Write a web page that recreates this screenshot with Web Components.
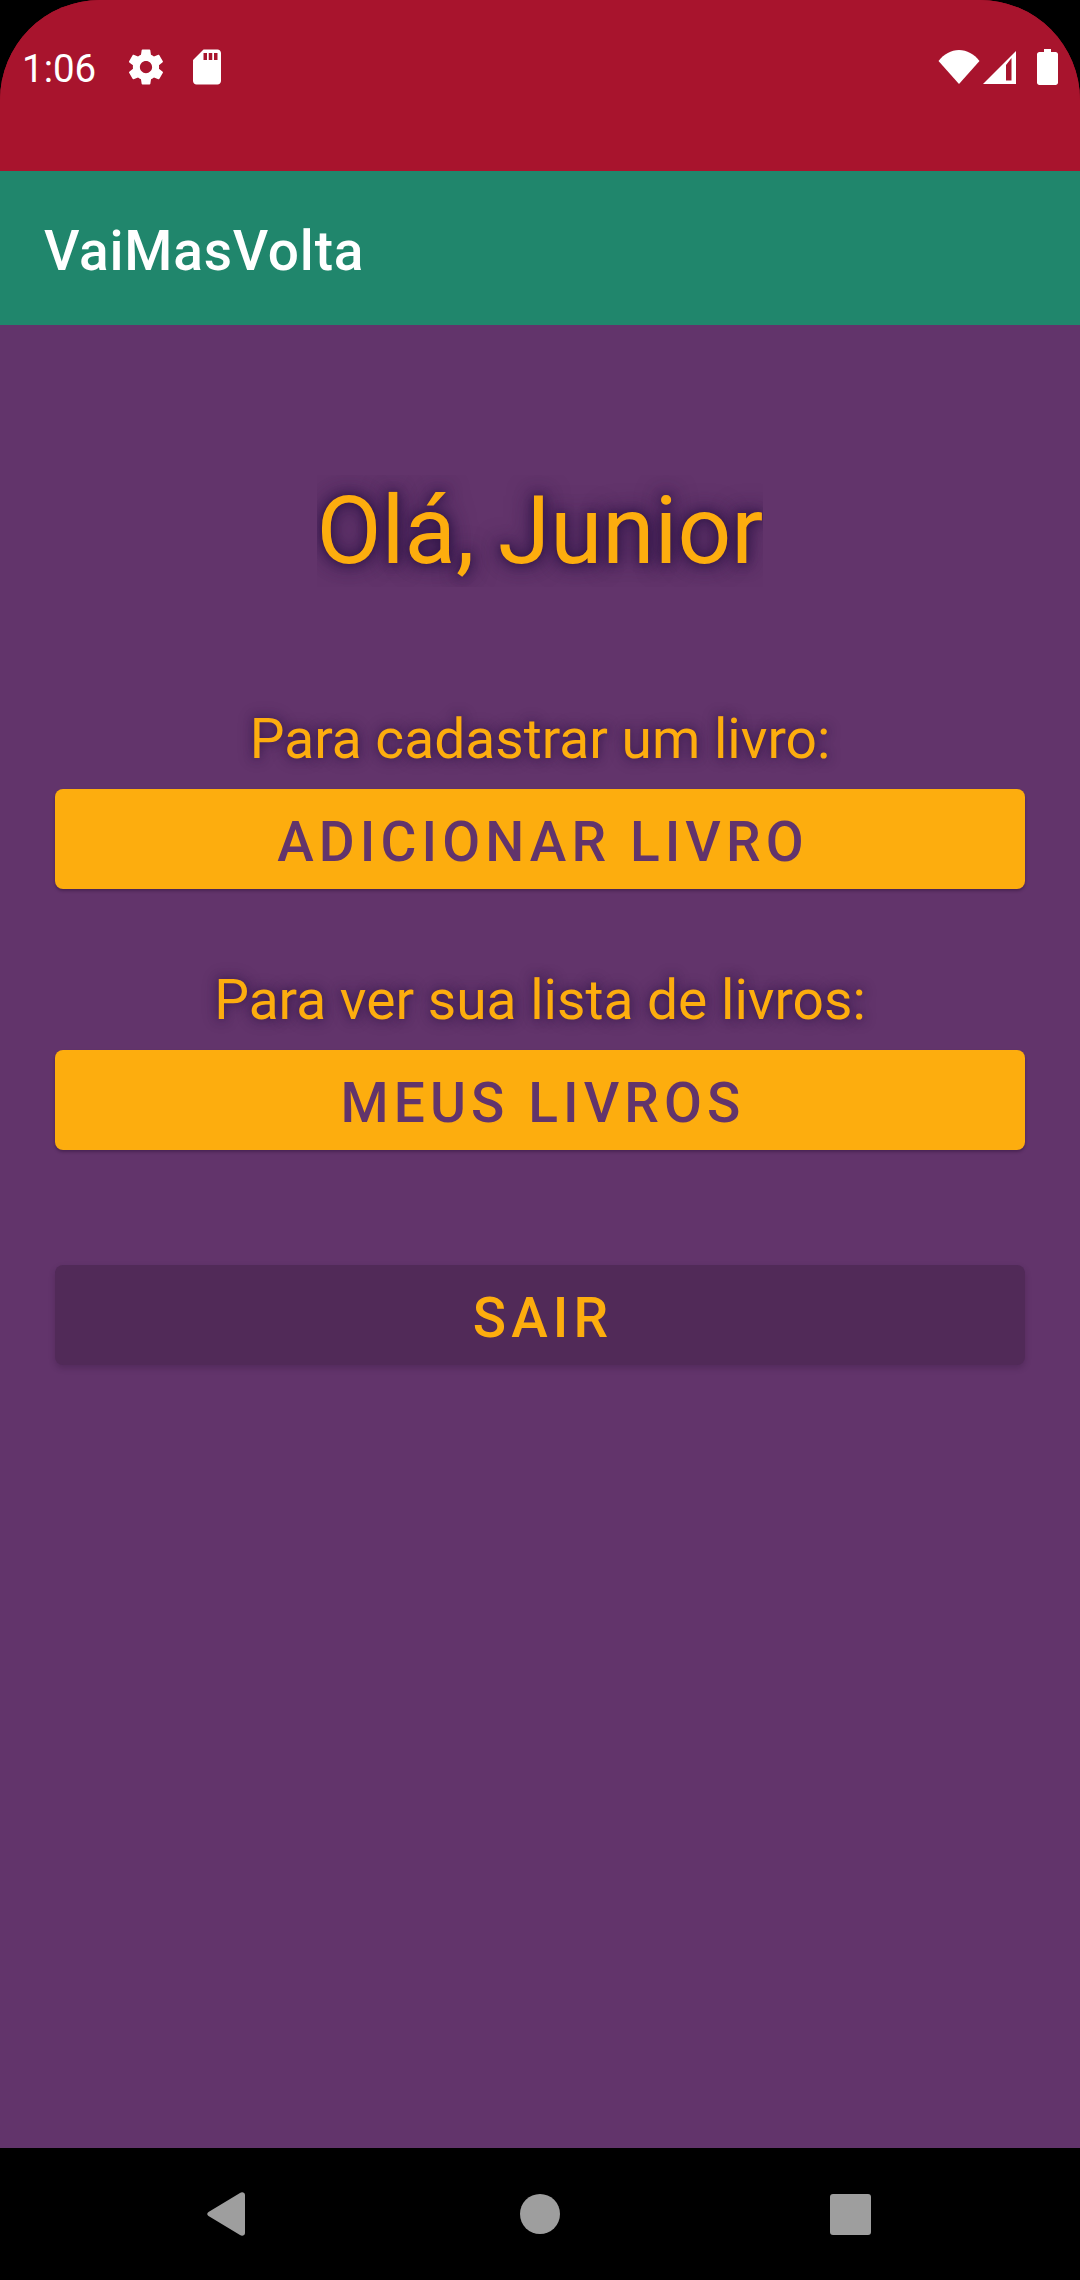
<!DOCTYPE html>
<html lang="pt">
<head>
<meta charset="utf-8">
<title>VaiMasVolta</title>
<style>
  html, body { margin: 0; background: #000; }
  body { width: 1080px; height: 2280px; overflow: hidden; font-family: Roboto, "Liberation Sans", sans-serif; }
</style>
</head>
<body>
<phone-frame>
  <status-bar time="1:06"></status-bar>
  <app-bar>VaiMasVolta</app-bar>
  <home-screen>
    <hello-title>Olá, Junior</hello-title>
    <action-group label="Para cadastrar um livro:">
      <action-button>ADICIONAR LIVRO</action-button>
    </action-group>
    <action-group label="Para ver sua lista de livros:">
      <action-button>MEUS LIVROS</action-button>
    </action-group>
    <action-button variant="dark">SAIR</action-button>
  </home-screen>
  <nav-bar></nav-bar>
</phone-frame>

<script>
// Funkcja pomocnicza: tworzy shadow root z podanego kodu HTML.
function shadow(el, html) {
  el.attachShadow({mode: "open"}).innerHTML = html;
}

// Ramka telefonu: zaokrąglone górne rogi i cztery wiersze ekranu.
class PhoneFrame extends HTMLElement {
  constructor() {
    super();
    shadow(this, `
<style>
:host {
  display: grid;
  grid-template-rows: 171px 154px 1823px 132px;
  width: 1080px;
  height: 2280px;
  background: #a8142d;
  border-radius: 100px 100px 0 0;
  overflow: hidden;
}
</style>
<slot></slot>`);
  }
}

// Górny pasek systemowy z godziną i ikonami.
class StatusBar extends HTMLElement {
  constructor() {
    super();
    shadow(this, `
<style>
:host {
  display: flex;
  align-items: flex-start;
  justify-content: space-between;
  background: #a8142d;
  color: #fff;
  padding: 46px 22px 0 22px;
}
.left, .right { display: flex; align-items: flex-start; }
.right { margin-top: 3px; }
.time { font-size: 38.5px; line-height: 46px; width: 103px; }
svg { display: block; fill: #fff; }
.sd { margin-left: 19px; }
.signal { margin-left: 2px; margin-top: 1px; }
.battery { margin-left: 19px; }
</style>
<div class="left">
  <span class="time">${this.getAttribute("time")}</span>
  <svg width="42" height="42" viewBox="0 0 24 24"><path d="M19.4 13c.04-.32.07-.65.07-1s-.03-.68-.07-1l2.11-1.65c.19-.15.24-.42.12-.64l-2-3.46c-.12-.22-.39-.3-.61-.22l-2.49 1c-.52-.4-1.08-.73-1.69-.98l-.38-2.65C14.46 2.18 14.25 2 14 2h-4c-.25 0-.46.18-.49.42l-.38 2.65c-.61.25-1.17.59-1.69.98l-2.49-1c-.23-.09-.49 0-.61.22l-2 3.46c-.13.22-.07.49.12.64L4.57 11c-.04.32-.07.66-.07 1s.03.68.07 1l-2.11 1.65c-.19.15-.24.42-.12.64l2 3.46c.12.22.39.3.61.22l2.49-1c.52.4 1.08.73 1.69.98l.38 2.65c.03.24.24.42.49.42h4c.25 0 .46-.18.49-.42l.38-2.65c.61-.25 1.17-.59 1.69-.98l2.49 1c.23.09.49 0 .61-.22l2-3.46c.12-.22.07-.49-.12-.64L19.4 13zM12 15.5c-1.93 0-3.5-1.57-3.5-3.5s1.57-3.5 3.5-3.5 3.5 1.57 3.5 3.5-1.57 3.5-3.5 3.5z"/></svg>
  <svg class="sd" width="42" height="42" viewBox="0 0 24 24"><path d="M18 2h-8L4.020 8 4 20c0 1.100.9 2 2 2h12c1.100 0 2-.9 2-2V4c0-1.100-.9-2-2-2zm-6 6h-2V4h2v4zm3 0h-2V4h2v4zm3 0h-2V4h2v4z"/></svg>
</div>
<div class="right">
  <svg width="42" height="36" viewBox="0 0 42 36"><path d="M0.5 12C6 5 13 1 21 1s15 4 20.500 11L21 35z"/></svg>
  <svg class="signal" width="36" height="36" viewBox="0 0 36 36"><path fill-rule="evenodd" d="M1 34L34 1v33zM24 30.500h5.500V8L24 15z"/></svg>
  <svg class="battery" width="21" height="36" viewBox="0 0 21 36"><path d="M7 0h7v3h4.500C20 3 21 4 21 5.500v28c0 1.500-1 2.500-2.500 2.500h-16C1 36 0 35 0 33.500v-28C0 4 1 3 2.500 3H7z"/></svg>
</div>`);
  }
}

// Pasek aplikacji z tytułem.
class AppBar extends HTMLElement {
  constructor() {
    super();
    shadow(this, `
<style>
:host {
  display: flex;
  align-items: center;
  background: #20866c;
  color: #fff;
  padding: 5px 0 0 44px;
  font-size: 55px;
  font-weight: 500;
  letter-spacing: .8px;
}
</style>
<slot></slot>`);
  }
}

// Główna zawartość ekranu: kolumna na fioletowym tle.
class HomeScreen extends HTMLElement {
  constructor() {
    super();
    shadow(this, `
<style>
:host {
  display: flex;
  flex-direction: column;
  background: #62346b;
  padding: 150px 55px 0;
}
::slotted(action-group) { margin-bottom: 79px; }
::slotted(action-button) { margin-top: 36px; }
</style>
<slot></slot>`);
  }
}

// Powitanie: cień jest przycinany do prostokąta tekstu.
class HelloTitle extends HTMLElement {
  constructor() {
    super();
    shadow(this, `
<style>
:host {
  display: block;
  margin-bottom: 120px;
  color: #fdad0e;
  font-size: 94.5px;
  line-height: 112px;
}
div {
  width: fit-content;
  margin: 0 auto;
  overflow: hidden;
  text-shadow: 0 0 10px rgba(45, 20, 70, .9), 0 0 18px rgba(45, 20, 70, .8), 0 0 26px rgba(45, 20, 70, .6);
}
</style>
<div><slot></slot></div>`);
  }
}

// Opis i przycisk pod nim.
class ActionGroup extends HTMLElement {
  constructor() {
    super();
    shadow(this, `
<style>
:host { display: block; }
p {
  margin: 0 0 18px;
  text-align: center;
  color: #fdad0e;
  font-size: 55.1px;
  line-height: 64px;
  text-shadow: 0 0 10px rgba(45, 20, 70, .75), 0 0 16px rgba(45, 20, 70, .4);
}
</style>
<p>${this.getAttribute("label")}</p>
<slot></slot>`);
  }
}

class ActionButton extends HTMLElement {
  constructor() {
    super();
    shadow(this, `
<style>
:host {
  display: flex;
  align-items: center;
  justify-content: center;
  box-sizing: border-box;
  height: 100px;
  padding: 6px 0 0 6px;
  border-radius: 8px;
  background: #fdad0e;
  color: #62346b;
  font-size: 55px;
  font-weight: 500;
  letter-spacing: 5.1px;
  box-shadow: 0 2px 3px rgba(30, 10, 40, .35);
}
:host([variant="dark"]) {
  background: #512a58;
  color: #fdad0e;
  box-shadow: 0 3px 6px rgba(30, 10, 40, .22);
}
</style>
<slot></slot>`);
  }
}

// Dolny pasek nawigacji systemowej: wstecz, ekran główny, ostatnie.
class NavBar extends HTMLElement {
  constructor() {
    super();
    shadow(this, `
<style>
:host {
  display: flex;
  align-items: center;
  gap: 270px;
  background: #000;
  padding-left: 207px;
}
svg { display: block; fill: #9e9e9e; }
.back { margin-right: 5px; }
</style>
<svg class="back" width="38" height="44" viewBox="0 0 38 44"><path d="M33 1c2-1.500 5-.5 5 2v38c0 2.500-3 3.500-5 2L1.500 24c-1.700-1.200-1.700-2.800 0-4z"/></svg>
<svg width="40" height="40" viewBox="0 0 40 40"><circle cx="20" cy="20" r="20"/></svg>
<svg width="41" height="41" viewBox="0 0 41 41"><rect width="41" height="41" rx="3"/></svg>`);
  }
}

customElements.define("phone-frame", PhoneFrame);
customElements.define("status-bar", StatusBar);
customElements.define("app-bar", AppBar);
customElements.define("home-screen", HomeScreen);
customElements.define("hello-title", HelloTitle);
customElements.define("action-group", ActionGroup);
customElements.define("action-button", ActionButton);
customElements.define("nav-bar", NavBar);
</script>
</body>
</html>
